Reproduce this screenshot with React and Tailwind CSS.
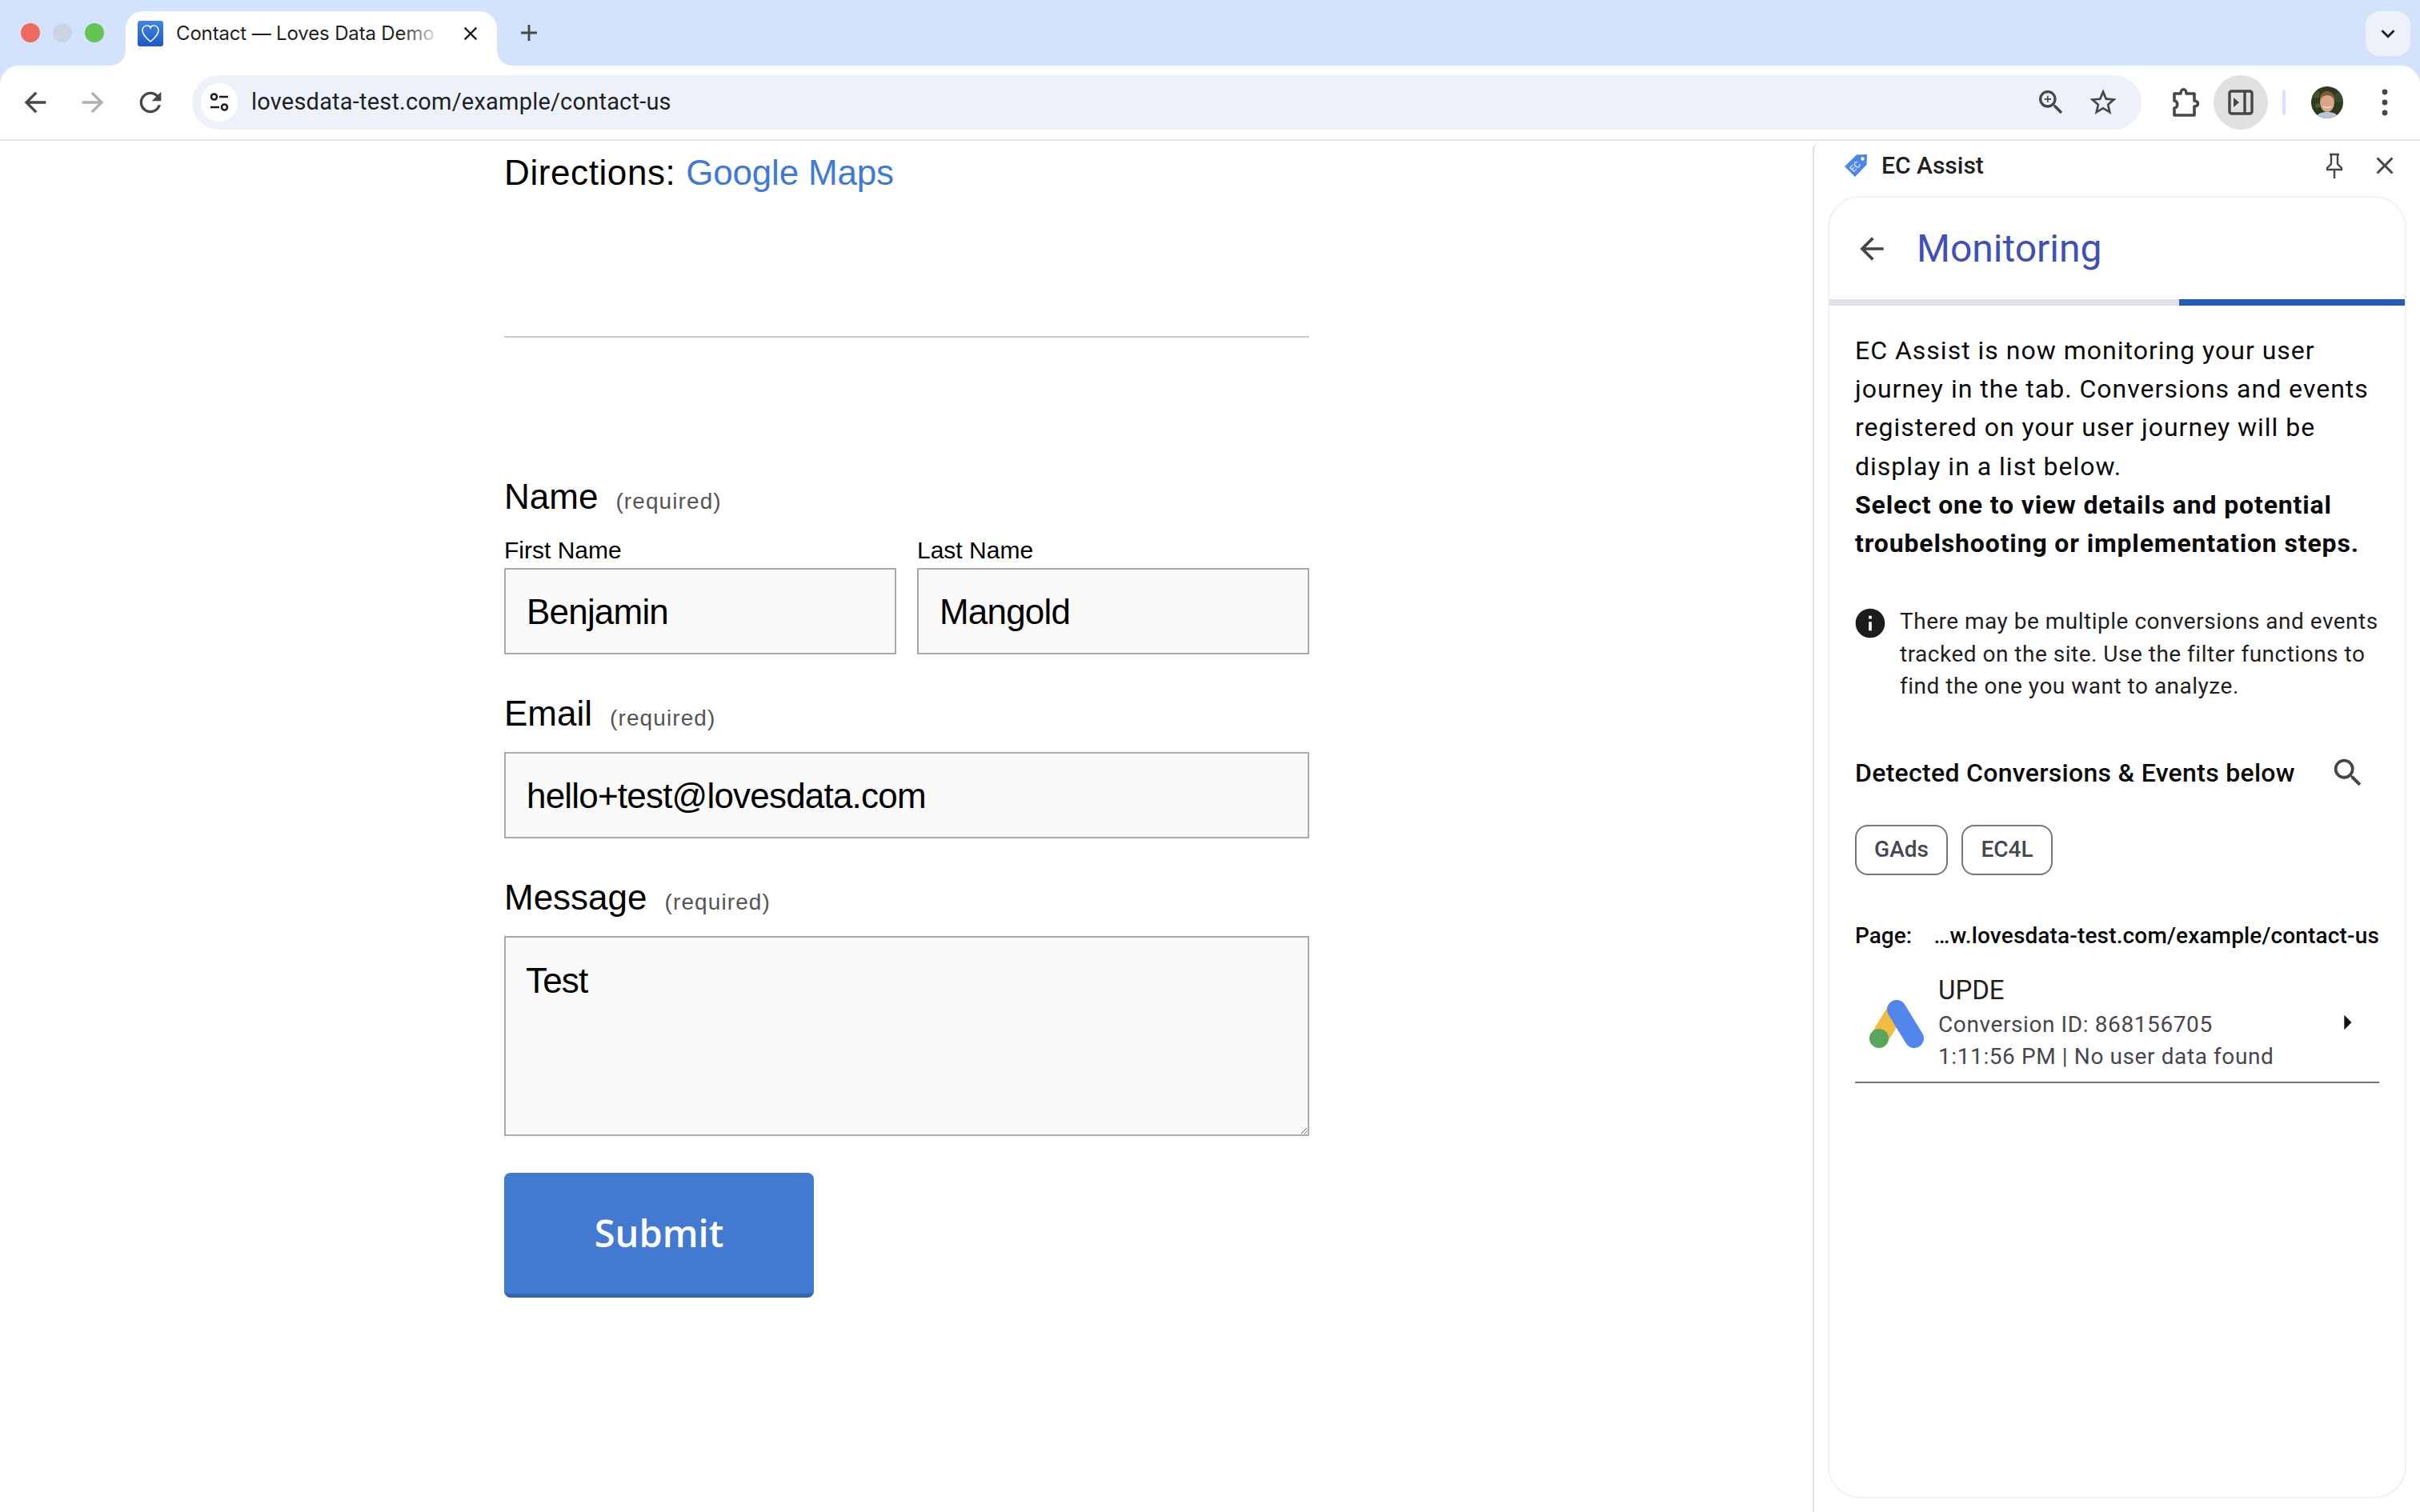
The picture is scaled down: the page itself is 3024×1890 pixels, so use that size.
import React from 'react';

const Icon = ({ d, className, size = 24, view = '0 0 24 24' }) => (
  <svg width={size} height={size} viewBox={view} fill="currentColor" className={className}>
    <path d={d} />
  </svg>
);

const paths = {
  back: 'M20 11H7.83l5.59-5.59L12 4l-8 8 8 8 1.41-1.41L7.83 13H20v-2z',
  forward: 'M12 4l-1.41 1.41L16.17 11H4v2h12.17l-5.58 5.59L12 20l8-8z',
  reload: 'M17.65 6.35A7.958 7.958 0 0 0 12 4c-4.42 0-7.99 3.58-7.99 8s3.57 8 7.99 8c3.73 0 6.84-2.55 7.73-6h-2.08A5.99 5.99 0 0 1 12 18c-3.31 0-6-2.69-6-6s2.69-6 6-6c1.66 0 3.14.69 4.22 1.78L13 11h7V4l-2.35 2.35z',
  close: 'M19 6.41L17.59 5 12 10.59 6.41 5 5 6.41 10.59 12 5 17.59 6.41 19 12 13.41 17.59 19 19 17.59 13.41 12z',
  star: 'M22 9.24l-7.19-.62L12 2 9.19 8.63 2 9.24l5.46 4.73L5.82 21 12 17.27 18.18 21l-1.63-7.03L22 9.24zM12 15.4l-3.76 2.27 1-4.28-3.32-2.88 4.38-.38L12 6.1l1.71 4.04 4.38.38-3.32 2.88 1 4.28L12 15.4z',
  zoom: 'M15.5 14h-.79l-.28-.27A6.471 6.471 0 0 0 16 9.5 6.5 6.5 0 1 0 9.5 16c1.61 0 3.09-.59 4.23-1.57l.27.28v.79l5 4.99L20.49 19l-4.99-5zm-6 0C7.01 14 5 11.99 5 9.5S7.01 5 9.5 5 14 7.01 14 9.5 11.99 14 9.5 14zM12 10h-2v2H9v-2H7V9h2V7h1v2h2v1z',
  search: 'M15.5 14h-.79l-.28-.27A6.471 6.471 0 0 0 16 9.5 6.5 6.5 0 1 0 9.5 16c1.61 0 3.09-.59 4.23-1.57l.27.28v.79l5 4.99L20.49 19l-4.99-5zm-6 0C7.01 14 5 11.99 5 9.5S7.01 5 9.5 5 14 7.01 14 9.5 11.99 14 9.5 14z',
  info: 'M12 2C6.48 2 2 6.48 2 12s4.48 10 10 10 10-4.48 10-10S17.52 2 12 2zm1 15h-2v-6h2v6zm0-8h-2V7h2v2z',
  caret: 'M10 17l5-5-5-5v10z',
};

const Required = ({ className = '' }) => (
  <span className={`text-[28px] text-[#555] tracking-[1.100px] ${className}`}>(required)</span>
);

const fieldClass =
  'block w-full h-[108px] border-2 border-[#a9a9a9] bg-[#fafafa] px-[26px] pt-[2px] text-[44px] tracking-[-0.8px] text-black outline-none';

const Favicon = () => (
  <svg width="32" height="32" viewBox="0 0 32 32" className="shrink-0">
    <defs>
      <linearGradient id="fav" x1="0" y1="0" x2="0" y2="1">
        <stop offset="0" stopColor="#3f86e0" />
        <stop offset="1" stopColor="#1f58c4" />
      </linearGradient>
    </defs>
    <rect width="32" height="32" rx="3" fill="url(#fav)" />
    <path d="M16 26 C10 21 6 17 6 12 C6 8 9 6 12 6 C14 6 15.5 7 16 8.5 C16.5 7 18 6 20 6 C23 6 26 8 26 12 C26 17 22 21 16 26Z" fill="none" stroke="#fff" strokeWidth="1.6" />
  </svg>
);

const Avatar = () => (
  <svg width="40" height="40" viewBox="0 0 40 40" className="rounded-full">
    <rect width="40" height="40" fill="#2c3a20" />
    <circle cx="6" cy="10" r="5" fill="#3f5230" />
    <circle cx="34" cy="14" r="6" fill="#3a4c2a" />
    <circle cx="8" cy="24" r="3" fill="#4a5c34" />
    <path d="M6 40c1-6 7-8 14-8s13 2 14 8z" fill="#b9c6da" />
    <ellipse cx="20" cy="20" rx="9" ry="12" fill="#d9a585" />
    <path d="M11 17c-1-7 4-11 9-11s10 4 9 11c-2-4-5-6-9-6s-7 2-9 6z" fill="#7d5a38" />
    <path d="M14.500 24c3 2.500 8 2.500 11 0-1 4-10 4-11 0z" fill="#fff" />
  </svg>
);

const AdsLogo = () => (
  <svg width="68" height="60" viewBox="0 0 68 60">
    <path d="M34 12 L12 48" stroke="#f0bd42" strokeWidth="23" strokeLinecap="round" fill="none" />
    <path d="M34 12 L56 48" stroke="#5286ec" strokeWidth="24" strokeLinecap="round" fill="none" />
    <circle cx="12" cy="48" r="12" fill="#58a65c" />
  </svg>
);

const TagLogo = () => (
  <svg width="30" height="30" viewBox="0 0 30 30">
    <path d="M1 16 L16 1.500 L28 1 Q29 1 29 2.500 L28.500 14 L14 29 Z" fill="#4a86ee" />
    <circle cx="23.500" cy="6.500" r="2.200" fill="#fff" />
    <text x="8" y="22" fontSize="11" fill="#fff" fontFamily="Roboto, sans-serif" transform="rotate(-45 12 18)">EC</text>
  </svg>
);

const Corner = ({ flip }) => (
  <svg width="22" height="22" viewBox="0 0 22 22" className={`absolute bottom-0 ${flip ? 'left-full' : 'right-full'}`}>
    {flip ? <path d="M0 0 Q0 22 22 22 L0 22 Z" fill="#fff" /> : <path d="M22 0 Q22 22 0 22 L22 22 Z" fill="#fff" />}
  </svg>
);

const TabStrip = () => (
  <div className="flex h-[82px] shrink-0 items-start bg-[#d3e3fd] pl-[26px] pr-[12px] pt-[14px]">
    <div className="flex h-[54px] items-center gap-[16px]">
      <span className="h-[24px] w-[24px] rounded-full bg-[#ee6a5f]" />
      <span className="h-[24px] w-[24px] rounded-full bg-[#ccd3e0]" />
      <span className="h-[24px] w-[24px] rounded-full bg-[#61c554]" />
    </div>
    <div className="relative z-10 ml-[27px] flex h-[68px] w-[464px] items-center rounded-t-[22px] bg-white pb-[12px] pl-[15px]">
      <Corner />
      <Corner flip />
      <Favicon />
      <div className="relative ml-[16px] w-[340px] whitespace-nowrap text-[24px] tracking-[-0.15px] text-[#1f1f1f] [font-family:Inter,sans-serif]">
        Contact — Loves Data Demo S
        <span className="absolute inset-y-0 right-[-4px] w-[64px] bg-gradient-to-r from-transparent to-white to-80%" />
      </div>
      <Icon d={paths.close} size={28} className="ml-[14px] text-[#1f1f1f]" />
    </div>
    <Icon d="M19 13h-6v6h-2v-6H5v-2h6V5h2v6h6v2z" size={34} className="ml-[23px] mt-[10px] text-[#474747]" />
    <div className="ml-auto flex h-[56px] w-[56px] items-center justify-center rounded-[18px] bg-[#edf2fa]">
      <Icon d="M7.41 8.59L12 13.17l4.59-4.58L18 10l-6 6-6-6z" size={34} className="text-[#1f1f1f]" />
    </div>
  </div>
);

const Toolbar = () => (
  <div className="flex h-[92px] shrink-0 items-center rounded-t-[24px] bg-white pl-[24px]">
    <Icon d={paths.back} size={40} className="text-[#474747]" />
    <Icon d={paths.forward} size={40} className="ml-[32px] text-[#b0b0b0]" />
    <Icon d={paths.reload} size={40} className="ml-[32px] text-[#474747]" />
    <div className="ml-[32px] flex h-[68px] w-[2436px] items-center rounded-full bg-[#edf2fa] pl-[11px]">
      <div className="flex h-[48px] w-[46px] items-center justify-center rounded-full bg-white">
        <svg width="28" height="28" viewBox="0 0 28 28" fill="none" stroke="#1f1f1f" strokeWidth="2.600">
          <circle cx="7.500" cy="7" r="3.500" />
          <path d="M14 7h11M3 20h11" />
          <circle cx="20.500" cy="20" r="3.500" />
        </svg>
      </div>
      <span className="ml-[17px] text-[29px] tracking-[0.2px] text-[#1f1f1f] [font-family:Roboto,sans-serif]">lovesdata-test.com/example/contact-us</span>
      <Icon d={paths.zoom} size={40} className="ml-auto text-[#474747]" />
      <Icon d={paths.star} size={40} className="ml-[25px] mr-[28px] text-[#474747]" />
    </div>
    <svg width="36" height="40" viewBox="0 0 36 40" fill="none" stroke="#474747" strokeWidth="3.600" strokeLinejoin="round" className="ml-[38px]">
      <path d="M3 9h8c0-7 7-7 7 0h10v9c6 0 6 7 0 7v11H3v-9c5 0 5-9 0-9z" />
    </svg>
    <div className="ml-[16px] flex h-[68px] w-[68px] items-center justify-center rounded-full bg-[#e1e1e1]">
      <svg width="34" height="34" viewBox="0 0 34 34" fill="none" stroke="#474747" strokeWidth="3.400">
        <rect x="3" y="3" width="28" height="28" rx="2.500" />
        <path d="M22 3v28" />
        <path d="M8 11l7 6-7 6z" fill="#474747" stroke="none" />
      </svg>
    </div>
    <span className="ml-[18px] h-[32px] w-[4px] rounded-full bg-[#d3e3fd]" />
    <div className="ml-[32px]">
      <Avatar />
    </div>
    <svg width="12" height="38" viewBox="0 0 12 38" fill="#474747" className="ml-[46px]">
      <circle cx="6" cy="6" r="3.400" />
      <circle cx="6" cy="19" r="3.400" />
      <circle cx="6" cy="32" r="3.400" />
    </svg>
  </div>
);

const ContactForm = () => (
  <div className="h-full w-[2265px] shrink-0 overflow-hidden pl-[630px] text-black [font-family:'Liberation_Sans',sans-serif]">
    <div className="w-[1006px]">
      <p className="pt-[14px] text-[44px] leading-[52px] tracking-[0.6px]">
        Directions: <span className="tracking-[-0.2px] text-[#3f7bd6]">Google Maps</span>
      </p>
      <hr className="mt-[178px] border-t-2 border-[#ccc]" />

      <div className="mt-[167px] flex items-baseline gap-[22px]">
        <span className="text-[44px] leading-[64px]">Name</span>
        <Required />
      </div>
      <div className="mt-[19px] flex gap-[26px]">
        <label className="flex-1">
          <span className="block text-[30px] leading-[32px]">First Name</span>
          <input readOnly value="Benjamin" className={`${fieldClass} mt-[6px]`} />
        </label>
        <label className="flex-1">
          <span className="block text-[30px] leading-[32px]">Last Name</span>
          <input readOnly value="Mangold" className={`${fieldClass} mt-[6px]`} />
        </label>
      </div>

      <div className="mt-[42px] flex items-baseline gap-[22px]">
        <span className="text-[44px] leading-[64px]">Email</span>
        <Required />
      </div>
      <input readOnly value="hello+test@lovesdata.com" className={`${fieldClass} mt-[16px]`} />

      <div className="mt-[42px] flex items-baseline gap-[22px]">
        <span className="text-[44px] leading-[64px]">Message</span>
        <Required />
      </div>
      <textarea readOnly value="Test" className={`${fieldClass} mt-[16px] !h-[250px] !pt-[28px] !pl-[25px] leading-[52px]`} />

      <button className="mt-[46px] block h-[156px] w-[387px] rounded-[8px] border-b-[5px] border-[#3565ad] bg-[#427ad2] text-[47px] font-semibold text-white [font-family:'Open_Sans',sans-serif]">
        Submit
      </button>
    </div>
  </div>
);

const SidePanel = () => (
  <div className="flex h-full flex-1 flex-col rounded-tl-[12px] border-l-2 border-[#e1e3e1] pl-[17px] pr-[17px] [font-family:Roboto,sans-serif]">
    <div className="flex h-[69px] shrink-0 items-center pb-[8px] pl-[20px] pr-[9px]">
      <TagLogo />
      <span className="ml-[17px] text-[30px] font-medium text-[#1f1f1f]">EC Assist</span>
      <svg width="30" height="34" viewBox="0 0 30 34" fill="none" stroke="#474747" strokeWidth="2.400" className="ml-auto mr-[30px]">
        <path d="M9 3h12M11 3v12l-5 5v2h18v-2l-5-5V3M15 22v11" />
      </svg>
      <Icon d={paths.close} size={36} className="text-[#474747]" />
    </div>

    <div className="flex min-h-0 flex-1 flex-col rounded-[40px] border-2 border-[#edf2fa]">
      <div className="flex h-[127px] shrink-0 items-center pl-[31px]">
        <Icon d={paths.back} size={44} className="text-[#444746]" />
        <h1 className="ml-[34px] text-[48px] text-[#3f51b5]">Monitoring</h1>
      </div>
      <div className="flex h-[8px] shrink-0">
        <div className="w-[437px] bg-[#dfe1ea]" />
        <div className="flex-1 bg-[#245db5]" />
      </div>

      <div className="pl-[32px] pr-[32px] pt-[32px]">
        <p className="text-[32px] leading-[48.200px] tracking-[1px] text-[#0a0a0a]">
          EC Assist is now monitoring your user journey in the tab. Conversions and events registered on your user journey will be display in a list below.
          <br />
          <span className="font-bold tracking-[0.85px]">Select one to view details and potential troubelshooting or implementation steps.</span>
        </p>

        <div className="mt-[54px] flex items-start">
          <Icon d={paths.info} size={44} className="-ml-[3px] shrink-0 text-[#1a1c1e]" />
          <p className="ml-[15px] text-[28px] leading-[40.500px] tracking-[0.5px] text-[#1f1f1f]">
            There may be multiple conversions and events tracked on the site. Use the filter functions to find the one you want to analyze.
          </p>
        </div>

        <div className="mt-[63px] flex items-center">
          <h2 className="text-[32px] font-medium tracking-[0.3px] text-[#0a0a0a]">Detected Conversions &amp; Events below</h2>
          <Icon d={paths.search} size={46} className="ml-auto mr-[16px] text-[#444746]" />
        </div>

        <div className="mt-[41px] flex gap-[17px]">
          <span className="flex h-[63px] w-[116px] items-center justify-center rounded-[16px] border-2 border-[#74777f] text-[28px] font-medium text-[#44474f]">GAds</span>
          <span className="flex h-[63px] w-[114px] items-center justify-center rounded-[16px] border-2 border-[#74777f] text-[28px] font-medium text-[#44474f]">EC4L</span>
        </div>

        <div className="mt-[60px] flex text-[28px] font-medium leading-[32px] text-[#0a0a0a]">
          <span>Page:</span>
          <span className="ml-auto tracking-[0.15px]">…w.lovesdata-test.com/example/contact-us</span>
        </div>

        <div className="mt-[29px] flex items-center border-b-2 border-[#6f7278] pb-[10px]">
          <div className="ml-[18px] mt-[4px]">
            <AdsLogo />
          </div>
          <div className="ml-[18px] flex-1">
            <div className="text-[33px] leading-[46px] text-[#1f1f1f]">UPDE</div>
            <div className="text-[28px] leading-[40.500px] tracking-[0.6px] text-[#49454f]">Conversion ID: 868156705</div>
            <div className="text-[28px] leading-[40.500px] tracking-[0.6px] text-[#49454f]">1:11:56 PM | No user data found</div>
          </div>
          <Icon d={paths.caret} size={44} className="mr-[18px] text-[#111]" />
        </div>
      </div>
    </div>
    <div className="h-[17px] shrink-0" />
  </div>
);

export default function App() {
  return (
    <div className="flex h-[1890px] w-[3024px] flex-col overflow-hidden bg-[#d3e3fd]">
      <TabStrip />
      <Toolbar />
      <div className="flex min-h-0 flex-1 border-t-2 border-[#e1e3e1] bg-white">
        <ContactForm />
        <SidePanel />
      </div>
    </div>
  );
}
